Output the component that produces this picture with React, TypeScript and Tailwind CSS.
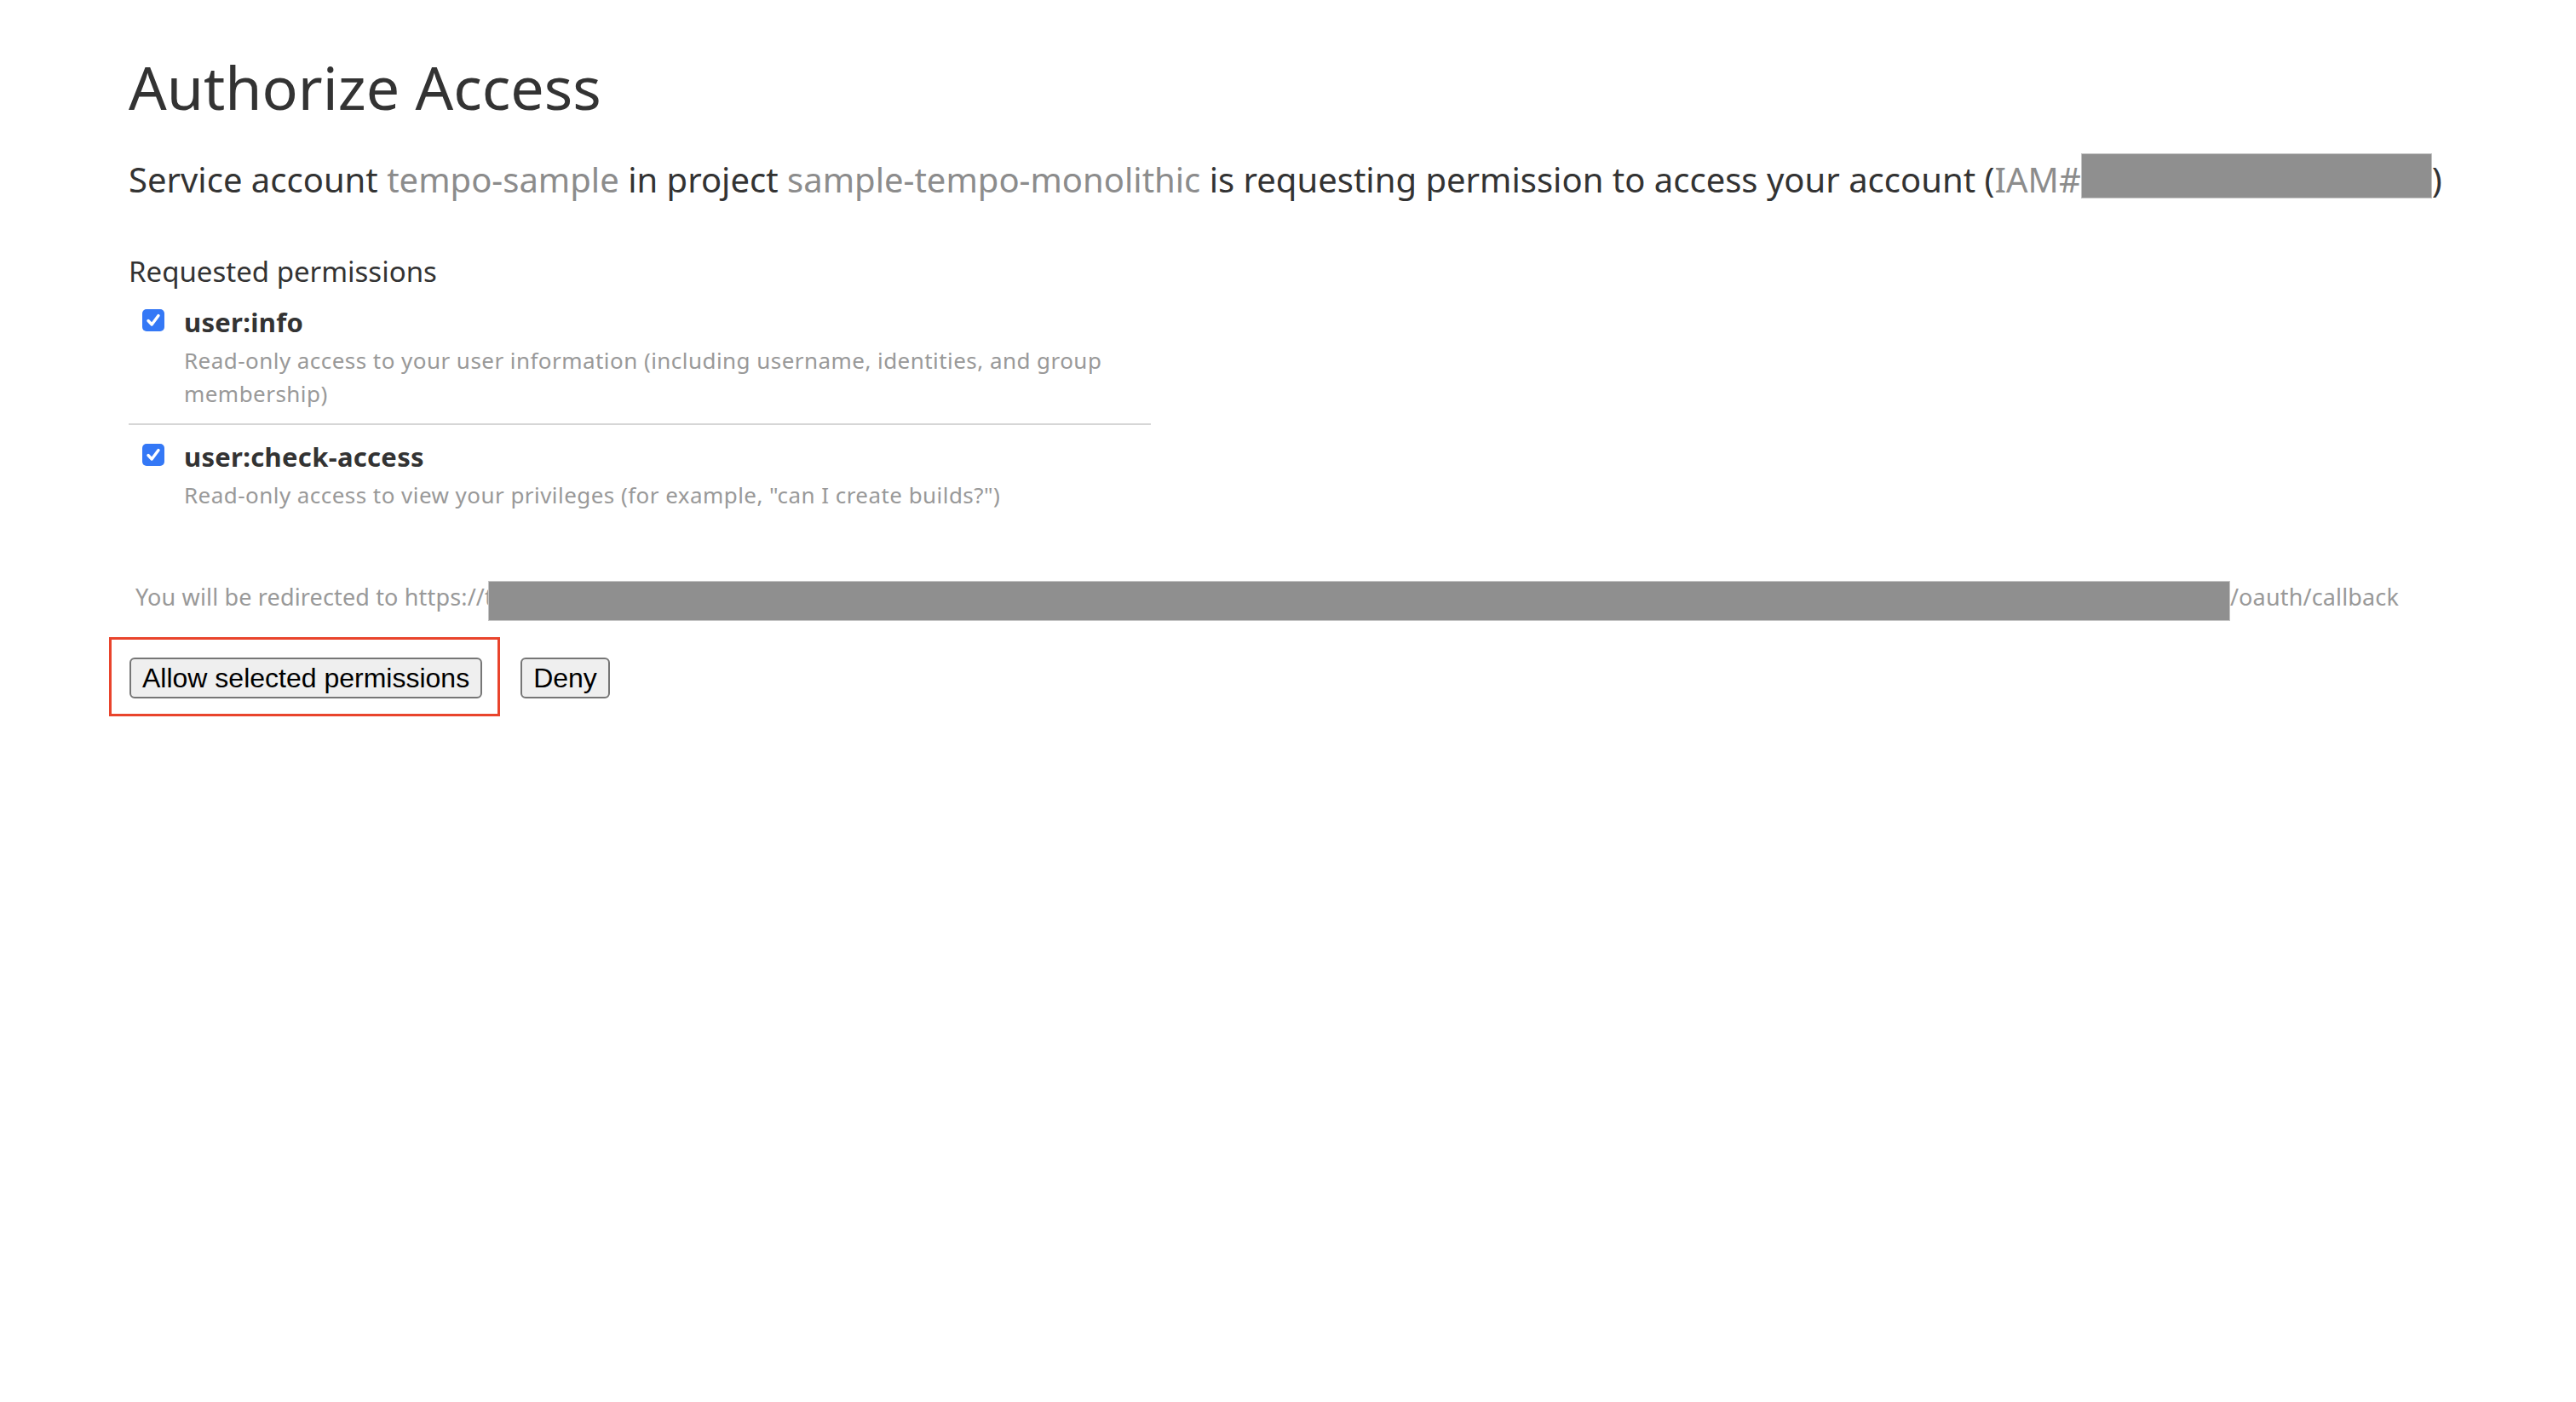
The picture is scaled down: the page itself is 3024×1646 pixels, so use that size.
const permissions = [
  {
    name: 'user:info',
    description:
      'Read-only access to your user information (including username, identities, and group membership)',
  },
  {
    name: 'user:check-access',
    description: 'Read-only access to view your privileges (for example, "can I create builds?")',
  },
];

function Checkbox() {
  return (
    <span className="mt-[5px] flex h-[26px] w-[26px] shrink-0 items-center justify-center rounded-[5px] bg-[#3478f6]">
      <svg viewBox="0 0 26 26" className="h-[26px] w-[26px]">
        <path d="M7 13.5 L11.2 18 L19 7.5" fill="none" stroke="#fff" strokeWidth="3.4" strokeLinecap="round" strokeLinejoin="round" />
      </svg>
    </span>
  );
}

export default function App() {
  return (
    <div className="min-h-screen bg-white pl-[151px] pt-[60px] font-['Noto_Sans',sans-serif] text-[#333]">
      <h1 className="text-[70px] font-normal leading-[84px]">Authorize Access</h1>

      <p className="mt-[35px] whitespace-nowrap text-[40px] leading-[64px]">
        Service account <span className="text-[#8c8c8c]">tempo-sample</span> in project{' '}
        <span className="text-[#8c8c8c]">sample-tempo-monolithic</span> is requesting permission to access your account (
        <span className="text-[#8c8c8c]">IAM#</span>
        <span className="inline-block h-[53px] w-[412px] border border-[#c4c4c4] bg-[#8f8f8f] align-[-7px]" />)
      </p>

      <h2 className="mt-[52px] text-[33px] font-normal leading-[48px]">Requested permissions</h2>

      <ul className="mt-[15px] w-[1200px]">
        {permissions.map((p, i) => (
          <li
            key={p.name}
            className={
              i === 0
                ? 'flex items-start gap-[23px] border-b-2 border-[#d6d6d6] pb-[15px] pl-[16px]'
                : 'flex items-start gap-[23px] pl-[16px] pt-[17px]'
            }
          >
            <Checkbox />
            <div>
              <p className="text-[31px] font-bold leading-[40px] tracking-[0.3px] text-[#333]">{p.name}</p>
              <p className="mt-[6px] max-w-[1134px] text-[26px] leading-[39px] tracking-[0.45px] text-[#999]">
                {p.description}
              </p>
            </div>
          </li>
        ))}
      </ul>

      <p className="mt-[80px] whitespace-nowrap pl-[8px] text-[27px] leading-[40px] tracking-[0.15px] text-[#999]">
        You will be redirected to https://t
        <span className="-ml-[6px] inline-block h-[47px] w-[2045px] border border-[#c4c4c4] bg-[#8f8f8f] align-[-18px]" />
        /oauth/callback
      </p>

      <div className="ml-[1px] mt-[43px] flex items-start gap-[45px] font-['Liberation_Sans',Arial,sans-serif]">
        <span className="relative flex">
          <button className="h-[48px] rounded-[6px] border-2 border-[#767676] bg-[#efefef] px-[13px] text-[32px] leading-[44px] text-black">
            Allow selected permissions
          </button>
          <span className="pointer-events-none absolute -bottom-[21px] -left-[24px] -right-[21px] -top-[24px] border-[3px] border-[#e9442c]" />
        </span>
        <button className="h-[48px] rounded-[6px] border-2 border-[#767676] bg-[#efefef] px-[13px] text-[32px] leading-[44px] text-black">
          Deny
        </button>
      </div>
    </div>
  );
}
